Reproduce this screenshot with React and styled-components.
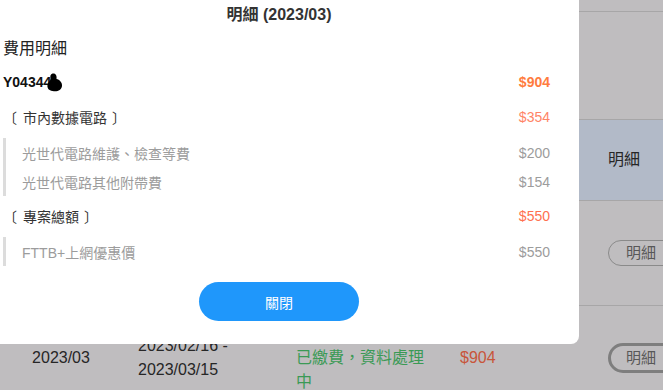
import React from 'react';
import styled, { createGlobalStyle } from 'styled-components';

const GlobalStyle = createGlobalStyle`
  html, body {
    margin: 0;
    padding: 0;
    overflow: hidden;
    background: #bfbdbf;
  }
  body {
    font-family: "Liberation Sans", "Noto Sans CJK TC", sans-serif;
  }
`

const Page = styled.div`
  position: relative;
  width: 700px;
  height: 390px;
  overflow: hidden;
`

const Table = styled.div`
  display: flex;
  flex-direction: column;
`

const Row = styled.div`
  display: grid;
  grid-template-columns: 122px 158px 164px 148px 108px;
  align-items: center;
  height: ${p => p.h}px;
  border-bottom: 1px solid #a7a6a7;
  background: ${p => p.head ? '#b2bac8' : 'transparent'};
  box-sizing: border-box;
  font-size: 16px;
  color: #262626;
`

const Cell = styled.div`
  grid-column: ${p => p.col || 'auto'};
  padding: ${p => p.offset ? '24px' : '0'} 16px 0 16px;
  text-align: ${p => p.center ? 'center' : 'left'};
  line-height: 24px;
  color: ${p => p.color || 'inherit'};
`

const DetailButton = styled.div`
  width: 72px;
  height: ${p => p.focus ? 30 : 26}px;
  box-sizing: border-box;
  border: ${p => p.focus ? '3px solid #7e7e7e' : '1px solid #8a8a8a'};
  border-radius: 15px;
  display: flex;
  align-items: center;
  padding-left: ${p => p.focus ? 15 : 17}px;
  font-size: 15px;
  color: #585858;
`

const Modal = styled.div`
  position: absolute;
  top: 0;
  left: -21px;
  width: 600px;
  height: 344px;
  background: #fff;
  border-radius: 0 0 8px 8px;
  display: flex;
  flex-direction: column;
  padding: 0 29px 0 24px;
  box-sizing: border-box;
`

const Title = styled.div`
  height: 30px;
  line-height: 30px;
  text-align: center;
  font-size: 16px;
  font-weight: bold;
  color: #333;
  margin-left: 5px;
`

const Heading = styled.div`
  margin-top: 6px;
  height: 26px;
  line-height: 26px;
  font-size: 16px;
  color: #222;
`

const Line = styled.div`
  display: flex;
  justify-content: space-between;
  align-items: center;
  height: 26px;
  margin-top: ${p => p.mt || 0}px;
  font-size: 14px;
`

const Account = styled.span`
  display: flex;
  align-items: center;
  font-weight: bold;
  color: #111;
`

const Section = styled.span`
  display: flex;
  align-items: center;
  color: #333;
`

const Bracket = styled.span`
  margin: ${p => p.open ? '0 6px 0 0' : '0 0 0 5px'};
`

const Amount = styled.span`
  color: ${p => p.color};
  font-weight: ${p => p.bold ? 'bold' : 'normal'};
`

const Group = styled.div`
  margin-top: ${p => p.mt}px;
  border-left: 3px solid #dcdcdc;
  display: flex;
  flex-direction: column;
`

const Item = styled.div`
  display: flex;
  justify-content: space-between;
  align-items: center;
  height: 29px;
  padding-left: 16px;
  font-size: 14px;
  color: #9c9c9c;
`

const Footer = styled.div`
  display: flex;
  justify-content: center;
  margin-top: 16px;
  margin-left: 5px;
`

const CloseButton = styled.button`
  width: 160px;
  height: 39px;
  border: none;
  border-radius: 20px;
  background: #1f97fb;
  color: #fff;
  font-family: inherit;
  font-size: 14px;
`

const Blob = () => (
  <svg width="17" height="19" viewBox="0 0 17 19" style={{ marginLeft: -5 }}>
    <path d="M6.5 0.5 C10 0 11 3 10.5 6 C13.5 6.5 16.5 9.5 16 13 C15.5 17.5 11 19 6.5 18 C3 17.5 1 15.5 1.5 12 C2 9 4.5 8 4.5 5.5 C4 3 4.5 1 6.5 0.5 Z" fill="#000" />
  </svg>
);

const App = () => {
  return (
    <Page>
      <GlobalStyle />
      <Table>
        <Row h={12} />
        <Row h={108} />
        <Row h={81} head>
          <Cell col={5}>明細</Cell>
        </Row>
        <Row h={105}>
          <Cell col={5}><DetailButton>明細</DetailButton></Cell>
        </Row>
        <Row h={104}>
          <Cell center>2023/03</Cell>
          <Cell>2023/02/16 -<br />2023/03/15</Cell>
          <Cell offset color="#3a9a55">已繳費，資料處理中</Cell>
          <Cell color="#c8553a">$904</Cell>
          <Cell><DetailButton focus>明細</DetailButton></Cell>
        </Row>
      </Table>

      <Modal>
        <Title>明細 (2023/03)</Title>
        <Heading>費用明細</Heading>
        <Line mt={7}>
          <Account>Y04344<Blob /></Account>
          <Amount color="#ff7c3e" bold>$904</Amount>
        </Line>
        <Line mt={9}>
          <Section><Bracket open>〔</Bracket>市內數據電路<Bracket>〕</Bracket></Section>
          <Amount color="#ff8466">$354</Amount>
        </Line>
        <Group mt={8}>
          <Item>光世代電路維護、檢查等費<span>$200</span></Item>
          <Item>光世代電路其他附帶費<span>$154</span></Item>
        </Group>
        <Line mt={7}>
          <Section><Bracket open>〔</Bracket>專案總額<Bracket>〕</Bracket></Section>
          <Amount color="#ff7050">$550</Amount>
        </Line>
        <Group mt={8}>
          <Item>FTTB+上網優惠價<span>$550</span></Item>
        </Group>
        <Footer>
          <CloseButton>關閉</CloseButton>
        </Footer>
      </Modal>
    </Page>
  );
}

export default App;
